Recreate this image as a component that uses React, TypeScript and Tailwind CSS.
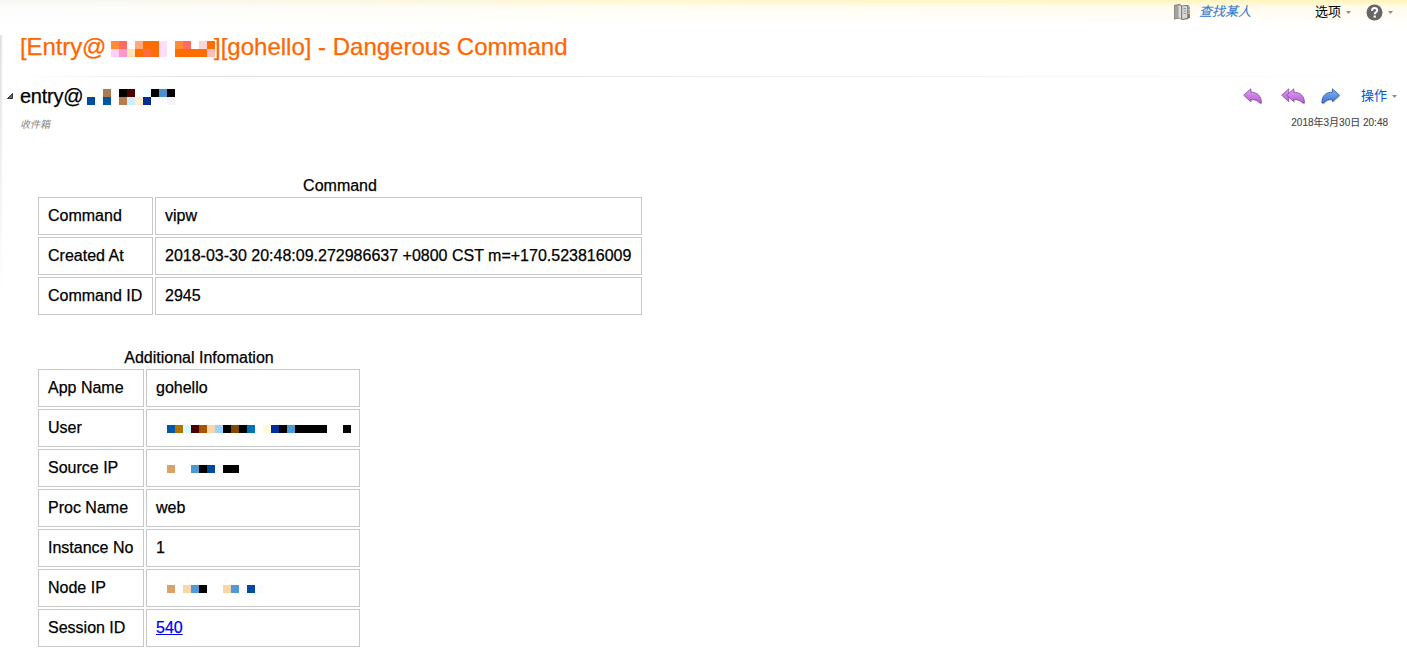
import React from 'react';

const CELL = 8;

// Each row lists block colours left to right; '' leaves the block empty.
function Mosaic({ rows, className = '' }: { rows: string[][]; className?: string }) {
  const cols = Math.max(...rows.map((r) => r.length));
  return (
    <svg
      className={`block shrink-0 ${className}`}
      width={cols * CELL}
      height={rows.length * CELL}
      shapeRendering="crispEdges"
      aria-hidden="true"
    >
      {rows.map((row, y) =>
        row.map((fill, x) =>
          fill ? <rect key={`${x}-${y}`} x={x * CELL} y={y * CELL} width={CELL} height={CELL} fill={fill} /> : null,
        ),
      )}
    </svg>
  );
}

const O = '#ff6d00';
const K = '#000000';

const titleMask = [
  ['#ff8c32', '#ff6b62', '', '#ffa97c', O, O, '#fdddf8', '', '#ff8c32', '#ff6b62', '', '#fdd3d3', O],
  ['#ffcff5', '#ff98c8', '#ffe3b8', O, '#ff6b40', O, '#fdddf8', '', O, O, O, O, '#fbbcbc'],
];
const senderMask = [
  ['#fffef2', '', '#a87b55', '', K, '#4a0000', '', '#efffff', K, '#4a90d0', K],
  ['#004a9f', '#f5ffff', '#0057a0', '', '#b87c4c', '#cceeff', '#ffedcc', '#002d92', '', '', '#f6f2f8'],
];
const userMask = [
  ['#0057a8', '#b07500', '#d8f8ff', '#4a0000', '#a85500', '#f8d6a8', '#9cd2f8', K, '#804800', K, '#0072b4', '',
    '#fffcd8', '#002d9c', K, '#4a9ad8', K, K, K, K, '', '', K],
];
const sourceMask = [['#d8a468', '', '', '#4a9ad0', K, '#004aa0', '', K, K]];
const nodeMask = [['#d8a468', '', '#f8d6a8', '#5098d8', K, '', '', '#f8d6a8', '#5098d8', '', '#004aa0', '#fef8ff']];

function Caret() {
  return (
    <svg width="5" height="3" viewBox="0 0 5 3" className="shrink-0">
      <path d="M0 0h5L2.5 3z" fill="#8c8c8c" />
    </svg>
  );
}

function BookIcon() {
  return (
    <svg width="18" height="18" viewBox="0 0 18 18" className="shrink-0">
      <path d="M1 2 6.500.8 9 2.500v14.300l-2.500-1.200L1 16.500z" fill="#8d8a84" />
      <path d="M9 2.500 15.500 2v14L9 17z" fill="#706c66" />
      <path d="M2 3 5.500 2v12.500L2 15.300z" fill="#a5a29c" />
      <path d="M5.500 2 8.500 3.500v12.300l-3-1.500z" fill="#dedcd8" />
      <path d="M9 3.300l5.300-.3v12L9 15.900z" fill="#d5d8da" />
      <path d="M10.500 5.500H13M10.500 8H13M10.500 10.500H13" stroke="#8f9aa5" strokeWidth="1" />
      <path d="M8.700 3v13.500" stroke="#66635e" strokeWidth=".8" />
      <path d="M15 3.500h2v3.300h-2z" fill="#8aa6c4" />
      <path d="M15 7.300h2v3.300h-2z" fill="#c49a6e" />
      <path d="M15 11h2v4h-2z" fill="#7d7a76" />
    </svg>
  );
}

function HelpIcon() {
  return (
    <svg width="17" height="17" viewBox="0 0 17 17" className="shrink-0">
      <circle cx="8.500" cy="8.500" r="8" fill="#666" />
      <path d="M6 6.700C6 3.200 11.300 3.400 11.200 6.300c0 2-2.500 1.900-2.500 4" fill="none" stroke="#fff" strokeWidth="2" />
      <rect x="7.600" y="11.500" width="2.200" height="2.100" fill="#fff" />
    </svg>
  );
}

const ARROW = 'M.7 7.200 7.800.8v3.400C14.300 4.300 18.500 7.600 18.300 15h-1.800c-2-2.700-4.700-3.700-8.700-3.700v2.400z';

function ReplyIcon() {
  return (
    <svg width="20" height="17" viewBox="0 0 20 17" className="shrink-0">
      <path d={ARROW} transform="translate(.8 1.200)" fill="#999" opacity=".5" />
      <path d={ARROW} fill="url(#purple)" stroke="#8a4aa5" strokeWidth=".8" strokeLinejoin="round" />
    </svg>
  );
}

function ReplyAllIcon() {
  return (
    <svg width="25" height="17" viewBox="0 0 25 17" className="shrink-0">
      <path d={ARROW} transform="translate(5.800 1.200)" fill="#999" opacity=".5" />
      <path d="M.7 7.200 7.800.8v12.900z" fill="url(#purple)" stroke="#8a4aa5" strokeWidth=".8" strokeLinejoin="round" />
      <path d={ARROW} transform="translate(5 0)" fill="url(#purple)" stroke="#8a4aa5" strokeWidth=".8" strokeLinejoin="round" />
    </svg>
  );
}

function ForwardIcon() {
  return (
    <svg width="20" height="17" viewBox="0 0 20 17" className="shrink-0">
      <path d={ARROW} transform="translate(19.700 1.200) scale(-1 1)" fill="#999" opacity=".5" />
      <path d={ARROW} transform="translate(19.200 0) scale(-1 1)" fill="url(#blue)" stroke="#2c56a0" strokeWidth=".8" strokeLinejoin="round" />
    </svg>
  );
}

type Row = [string, React.ReactNode];

function DataTable({ caption, rows, className, labelClass }: {
  caption: string; rows: Row[]; className: string; labelClass: string;
}) {
  return (
    <table className={`table-fixed border-separate border-spacing-[2px] text-[16px] leading-[18px] ${className}`}>
      <caption className="h-[19px] leading-[19px]">{caption}</caption>
      <tbody>
        {rows.map(([label, value]) => (
          <tr key={label}>
            <td className={`h-[38px] border border-[#c8c8c8] px-[9px] pt-0 pb-px ${labelClass}`}>{label}</td>
            <td className="h-[38px] border border-[#c8c8c8] px-[9px] pt-0 pb-px whitespace-nowrap">{value}</td>
          </tr>
        ))}
      </tbody>
    </table>
  );
}

const commandRows: Row[] = [
  ['Command', 'vipw'],
  ['Created At', '2018-03-30 20:48:09.272986637 +0800 CST m=+170.523816009'],
  ['Command ID', '2945'],
];

const infoRows: Row[] = [
  ['App Name', 'gohello'],
  ['User', <Mosaic rows={userMask} className="mt-[3px] ml-[11px]" />],
  ['Source IP', <Mosaic rows={sourceMask} className="mt-[3px] ml-[11px]" />],
  ['Proc Name', 'web'],
  ['Instance No', '1'],
  ['Node IP', <Mosaic rows={nodeMask} className="mt-[3px] ml-[11px]" />],
  ['Session ID', <a href="#session" className="text-[#0000ee] underline">540</a>],
];

export default function App() {
  return (
    <div className="flex h-[657px] w-full flex-col overflow-hidden bg-white font-['Liberation_Sans','Noto_Sans_CJK_SC',sans-serif] text-black [-webkit-text-stroke:0.25px_currentColor]">
      <svg width="0" height="0" className="absolute">
        <defs>
          <linearGradient id="purple" x1="0" y1="0" x2="0" y2="1">
            <stop offset="0" stopColor="#dfa0f0" />
            <stop offset="1" stopColor="#b55fd2" />
          </linearGradient>
          <linearGradient id="blue" x1="0" y1="0" x2="0" y2="1">
            <stop offset="0" stopColor="#84b0f0" />
            <stop offset="1" stopColor="#3d76d6" />
          </linearGradient>
        </defs>
      </svg>

      <header className="flex h-[35px] shrink-0 items-start justify-end bg-linear-to-r from-[#f6f6f4] via-[#fff7cc] via-45% to-[#fff3b5]">
        <div className="flex h-full w-full items-start justify-end bg-linear-to-b from-white/0 via-white/75 via-[7px] to-white to-[26px] pr-[14px] text-[13px] leading-[18px] [-webkit-text-stroke-width:0]">
          <div className="flex h-6 items-center">
            <BookIcon />
            <span className="ml-[8px] text-[#397bcc] italic [-webkit-text-stroke-width:0.1px]">查找某人</span>
            <span className="mr-[5px] ml-[64px]">选项</span>
            <Caret />
            <span className="mr-[5px] ml-[15px]"><HelpIcon /></span>
            <Caret />
          </div>
        </div>
      </header>

      <div className="flex h-[622px]">
        <div className="h-[260px] w-[3px] shrink-0 bg-linear-to-r from-[#d4d8da] to-white mask-linear-[180deg,black,transparent]" />
        <main className="min-w-0 flex-1">
          <h1 className="flex h-[41px] items-start pl-[17px] text-[24px] leading-[24px] text-[#ff6600]">
            <span className="w-[91px] tracking-[-0.1px] whitespace-nowrap">[Entry@</span>
            <Mosaic rows={titleMask} className="mt-[6px]" />
            <span className="-ml-px whitespace-nowrap">][gohello] - Dangerous Command</span>
          </h1>
          <div className="ml-[17px] h-px bg-linear-to-r from-white via-[#dedede] via-15% to-white" />

          <section className="flex h-[62px] justify-between">
            <div>
              <div className="flex h-[38px] items-center pl-1">
                <svg width="6" height="6" viewBox="0 0 6 6">
                  <path d="M5.500.5v5h-5z" fill="#666" stroke="#333" />
                </svg>
                <span className="ml-[7px] w-[67px] text-[20px] leading-6 tracking-[-0.25px]">entry@</span>
                <Mosaic rows={senderMask} className="mt-[2px]" />
              </div>
              <div className="pl-[17px] text-[10px] leading-[20px] text-[#888] italic [-webkit-text-stroke-width:0]">收件箱</div>
            </div>
            <div>
              <div className="flex h-[38px] items-center pr-[10px]">
                <ReplyIcon />
                <span className="ml-[18px]"><ReplyAllIcon /></span>
                <span className="ml-[15px]"><ForwardIcon /></span>
                <span className="mr-[5px] ml-5 text-[13px] text-[#0055cc] [-webkit-text-stroke-width:0]">操作</span>
                <Caret />
              </div>
              <div className="pr-[19px] text-right text-[10px] leading-[16px] text-[#444] [-webkit-text-stroke-width:0.1px]">2018年3月30日 20:48</div>
            </div>
          </section>

          <div className="flex flex-col items-start gap-[31px] pt-[37px] pl-[33px]">
            <DataTable caption="Command" rows={commandRows} className="w-[608px]" labelClass="w-[115px]" />
            <DataTable caption="Additional Infomation" rows={infoRows} className="w-[326px]" labelClass="w-[106px]" />
          </div>
        </main>
      </div>
    </div>
  );
}
